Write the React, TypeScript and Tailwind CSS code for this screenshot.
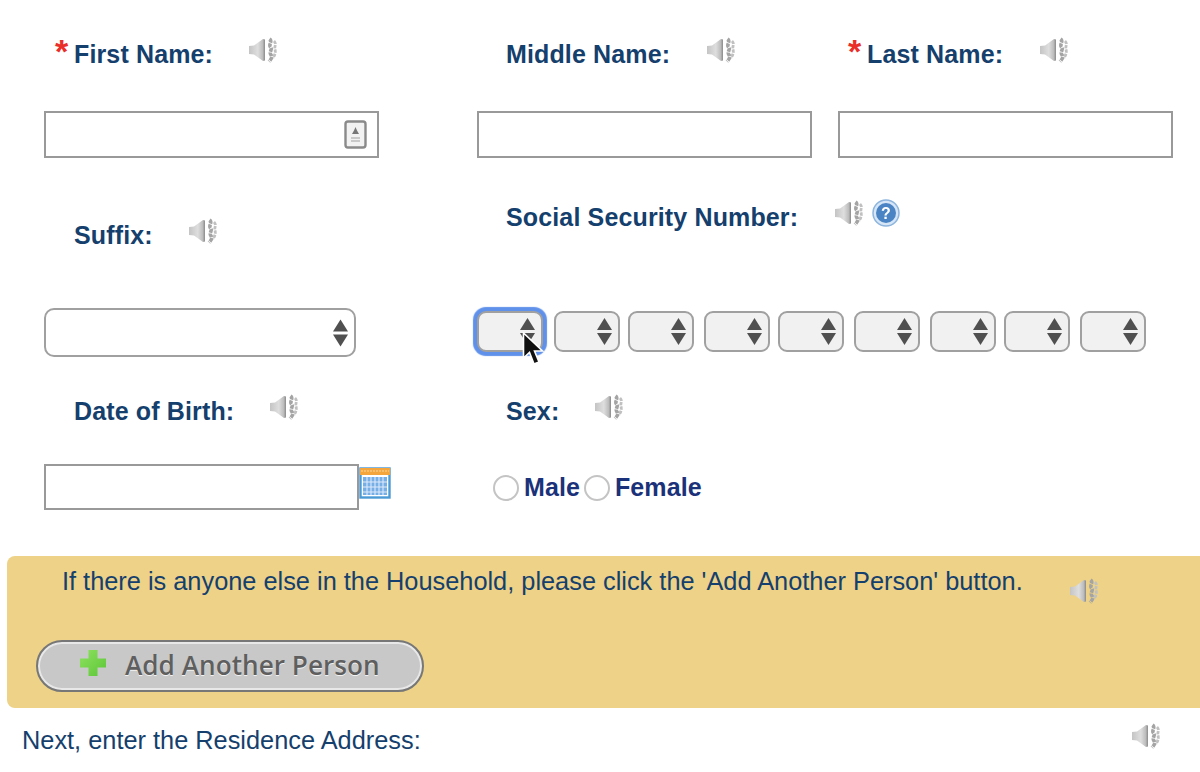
import React from "react";

function Speaker({ className = "" }: { className?: string }) {
  return (
    <svg viewBox="0 0 30 28" className={`w-[30px] h-[28px] shrink-0 blur-[0.4px] ${className}`}>
      <defs>
        <linearGradient id="spk" x1="0" y1="0" x2="1" y2="0">
          <stop offset="0" stopColor="#c4c4c4" />
          <stop offset="0.55" stopColor="#dedede" />
          <stop offset="0.85" stopColor="#bdbdbd" />
          <stop offset="1" stopColor="#8a8a8a" />
        </linearGradient>
      </defs>
      <path d="M1 10 L6 9.5 L15 3 L17 3.5 L17 24.5 L15 25 L6 18.5 L1 18 Z" fill="url(#spk)" />
      <path d="M21.5 3 C25 5.5 20 8.5 22.5 11 C25 13.5 20.5 16 23 19 C25 21.5 22.5 24 21 25.5" fill="none" stroke="#a4a4a4" strokeWidth="3.6" strokeDasharray="4 0.8" />
      <path d="M26 5 C29 8 26 10.5 27 13.5 C28 16.5 26.5 19.5 25 22" fill="none" stroke="#c0c0c0" strokeWidth="2.8" strokeDasharray="3.4 1" />
    </svg>
  );
}

function Arrows({ className = "" }: { className?: string }) {
  return (
    <svg viewBox="0 0 15 27" className={`shrink-0 ${className}`}>
      <path d="M7.5 0 L15 12 L0 12 Z" fill="#505050" />
      <path d="M0 15 L15 15 L7.5 27 Z" fill="#505050" />
    </svg>
  );
}

const labelText = "text-[#153f6d] text-[25px] leading-[30px] font-bold tracking-[0.14px] whitespace-nowrap";

function Field({ children, star, sp }: { children: string; star?: boolean; sp: string }) {
  return (
    <div className="flex items-start">
      {star && <span className="w-[19px] h-[30px] text-[#ea2f2a] text-[34px] leading-[30px] font-bold -mt-[3px]">*</span>}
      <span className={labelText}>{children}</span>
      <Speaker className={`-mt-[3px] ${sp}`} />
    </div>
  );
}

function MiniSelect({ className = "" }: { className?: string }) {
  return (
    <div className={`w-[66px] h-[41px] rounded-[9px] border-2 border-[#a0a0a0] bg-[#f1f1f1] flex items-center justify-end pr-[6px] ${className}`}>
      <Arrows className="w-[15px] h-[27px]" />
    </div>
  );
}

const gaps = ["ml-[11px]", "ml-[8px]", "ml-[10px]", "ml-[8px]", "ml-[10px]", "ml-[10px]", "ml-[8px]", "ml-[10px]"];

export default function App() {
  return (
    <div className="relative w-[1200px] h-[772px] overflow-hidden bg-white font-['Liberation_Sans',Arial,sans-serif]">
      <div className="h-[111px] pt-[39px] pl-[55px] flex">
        <div className="w-[422px]"><Field star sp="ml-[35px]">First Name:</Field></div>
        <div className="w-[371px] pl-[29px]"><Field sp="ml-[36px]">Middle Name:</Field></div>
        <div><Field star sp="ml-[36px]">Last Name:</Field></div>
      </div>

      <div className="h-[47px] pl-[44px] flex">
        <div className="w-[335px] h-[47px] border-2 border-[#999999] flex items-center justify-end pr-[10px]">
          <svg viewBox="0 0 23 29" className="w-[23px] h-[29px] blur-[0.3px]">
            <rect x="1.5" y="1.5" width="20" height="26" rx="2.5" fill="#f2f2f2" stroke="#8a8a8a" strokeWidth="2.4" />
            <path d="M11.5 7 L13 10.5 L15 14 H8 L10 10.5 Z" fill="#777777" />
            <path d="M7 18 H16 M7 21 H16" stroke="#bcbcbc" strokeWidth="1.6" />
          </svg>
        </div>
        <div className="w-[335px] h-[47px] border-2 border-[#999999] ml-[98px]" />
        <div className="w-[335px] h-[47px] border-2 border-[#999999] ml-[26px]" />
      </div>

      <div className="h-[150px] flex">
        <div className="w-[477px] pl-[74px] pt-[62px]">
          <Field sp="ml-[35px]">Suffix:</Field>
        </div>
        <div className="pl-[29px] pt-[44px]">
          <div className="flex items-start">
            <span className={labelText}>Social Security Number:</span>
            <Speaker className="-mt-[3px] ml-[36px]" />
            <svg viewBox="0 0 28 28" className="w-[28px] h-[28px] -mt-[3px] ml-[8px] blur-[0.3px]">
              <circle cx="14" cy="14" r="13" fill="#d6e6f6" stroke="#8db5de" strokeWidth="1.5" />
              <circle cx="14" cy="14" r="10" fill="#4a84c4" />
              <text x="14" y="20" textAnchor="middle" fontSize="16" fontWeight="700" fill="#ffffff" fontFamily="Liberation Sans">?</text>
            </svg>
          </div>
        </div>
      </div>

      <div className="h-[88px] flex items-start">
        <div className="w-[477px] pl-[44px]">
          <div className="w-[312px] h-[49px] rounded-[10px] border-2 border-[#a0a0a0] bg-white flex items-center justify-end pr-[6px]">
            <Arrows className="w-[15px] h-[32px]" />
          </div>
        </div>
        <div className="flex mt-[3px]">
          <div className="w-[66px] h-[41px] rounded-[9px] border-2 border-[#a0a0a0] bg-[#f1f1f1] shadow-[0_0_1px_4px_#5f90ea] flex items-center justify-end pr-[6px]">
            <Arrows className="w-[15px] h-[27px]" />
          </div>
          {gaps.map((g, i) => (
            <MiniSelect key={i} className={g} />
          ))}
        </div>
      </div>

      <div className="h-[68px] flex">
        <div className="w-[477px] pl-[74px]"><Field sp="ml-[35px]">Date of Birth:</Field></div>
        <div className="pl-[29px]"><Field sp="ml-[35px]">Sex:</Field></div>
      </div>

      <div className="h-[92px] flex items-start">
        <div className="w-[449px] pl-[44px] flex items-start">
          <div className="w-[315px] h-[46px] border-2 border-[#999999] shrink-0" />
          <svg viewBox="0 0 32 32" className="w-[32px] h-[32px] mt-[3px] shrink-0 blur-[0.3px]">
            <rect x="1.5" y="1.5" width="29" height="29" fill="#ffffff" stroke="#4a9ad6" strokeWidth="2.4" />
            <rect x="1" y="1" width="30" height="7" fill="#f4a63c" />
            <path d="M2 4 H30" stroke="#fbd79a" strokeWidth="1" strokeDasharray="2 1" />
            <rect x="4" y="10" width="24" height="18" fill="#76aee6" />
            <path d="M8 10 V28 M12 10 V28 M16 10 V28 M20 10 V28 M24 10 V28 M4 15 H28 M4 20 H28 M4 25 H28" stroke="#dbeafa" strokeWidth="1.1" />
          </svg>
        </div>
        <div className="ml-[44px] flex items-center h-[46px] text-[#1b327a] text-[25px] font-bold tracking-[0.1px]">
          <span className="w-[26px] h-[26px] rounded-full border-2 border-[#c4c4c4] bg-white mt-[2px] shrink-0" />
          <span className="ml-[5px] leading-[30px]">Male</span>
          <span className="w-[26px] h-[26px] rounded-full border-2 border-[#c4c4c4] bg-white ml-[4px] mt-[2px] shrink-0" />
          <span className="ml-[5px] leading-[30px]">Female</span>
        </div>
      </div>

      <div className="ml-[7px] h-[152px] bg-[#edd287] rounded-l-[8px]">
        <div className="h-[84px] pt-[10px] pl-[55px] flex items-start">
          <span className="text-[#153f6d] text-[25.35px] leading-[30px] whitespace-nowrap">If there is anyone else in the Household, please click the 'Add Another Person' button.</span>
          <Speaker className="ml-[46px] mt-[11px]" />
        </div>
        <button className="ml-[29px] w-[388px] h-[52px] rounded-full border-2 border-[#777777] bg-[#c8c8c8] shadow-[inset_0_0_0_2px_#e8e8e8] flex items-center pl-[41px]">
          <svg viewBox="0 0 28 28" className="w-[28px] h-[28px] shrink-0 -mt-[6px] blur-[0.4px]">
            <defs>
              <linearGradient id="pls" x1="0" y1="0" x2="1" y2="1">
                <stop offset="0" stopColor="#8fe160" />
                <stop offset="1" stopColor="#5cc636" />
              </linearGradient>
            </defs>
            <path d="M9.5 1 H18.5 V9.5 H27 V18.5 H18.5 V27 H9.5 V18.5 H1 V9.5 H9.5 Z" fill="url(#pls)" />
          </svg>
          <span className="ml-[18px] text-[#5f5f5f] text-[26.2px] font-semibold font-['Open_Sans',sans-serif] [text-shadow:0_1px_0_#f2f2f2] whitespace-nowrap">Add Another Person</span>
        </button>
      </div>

      <div className="flex items-start justify-between pl-[22px] pr-[39px] pt-[17px]">
        <span className="text-[#153f6d] text-[25.35px] leading-[30px] whitespace-nowrap">Next, enter the Residence Address:</span>
        <Speaker className="-mt-[3px]" />
      </div>

      <svg viewBox="0 0 22 36" className="absolute left-[522px] top-[332px] w-[22px] h-[36px]">
        <path d="M1.5 1 L1.5 26 L7.5 20.5 L12 32 L17 30 L12.5 19 L20.5 19 Z" fill="#111111" stroke="#ffffff" strokeWidth="1.6" />
      </svg>
    </div>
  );
}
